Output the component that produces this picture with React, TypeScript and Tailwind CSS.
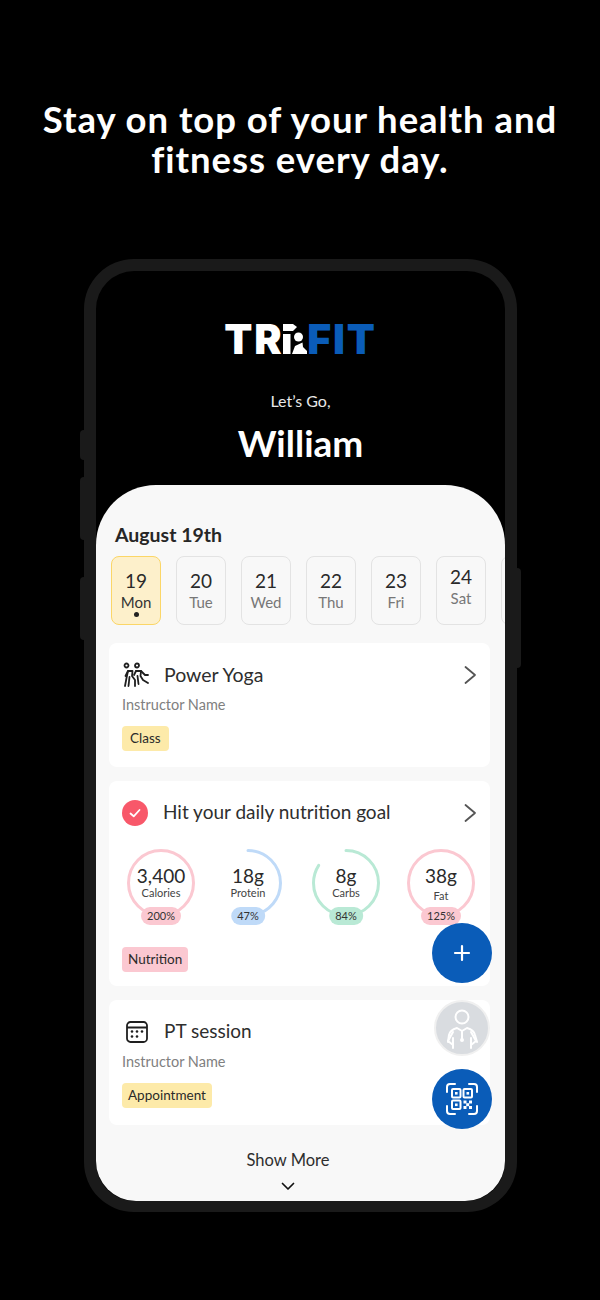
const sans = "font-['Lato','Noto_Sans',sans-serif]";

const days = [
  { n: "19", d: "Mon", active: true },
  { n: "20", d: "Tue" },
  { n: "21", d: "Wed" },
  { n: "22", d: "Thu" },
  { n: "23", d: "Fri" },
  { n: "24", d: "Sat", lifted: true },
];

const rings = [
  { value: "3,400", label: "Calories", pct: "200%", amount: 100, stroke: "#fbc8d1", pill: "bg-[#fbc8d1]", space: "ml-[18px]", low: false },
  { value: "18g", label: "Protein", pct: "47%", amount: 47, stroke: "#bfdaf8", pill: "bg-[#bfdaf8]", space: "ml-[19px]", low: false },
  { value: "8g", label: "Carbs", pct: "84%", amount: 84, stroke: "#b9e9d5", pill: "bg-[#b9e9d5]", space: "ml-[30px]", low: false },
  { value: "38g", label: "Fat", pct: "125%", amount: 100, stroke: "#fbc8d1", pill: "bg-[#fbc8d1]", space: "ml-[27px]", low: true },
];

function Chevron() {
  return (
    <svg width="14" height="20" viewBox="0 0 14 20" fill="none" stroke="#555" strokeWidth="1.8" strokeLinecap="round" strokeLinejoin="round">
      <path d="M2.5 2 L12 10 L2.5 18" />
    </svg>
  );
}

function LogoFigure() {
  return (
    <svg width="24" height="30" viewBox="0 0 24 30" fill="#fff">
      <path d="M0 0 H10 L14 3 L10 7 H0 Z" />
      <path d="M0 10 H7.5 V30 H0 Z" />
      <circle cx="15.5" cy="13" r="4.5" />
      <path d="M9 30 L12 22 L19.5 18.5 L20 23 L24 27 V30 Z" />
    </svg>
  );
}

function YogaIcon() {
  return (
    <svg width="27" height="27" viewBox="0 0 27 27" fill="none" stroke="#1f1f1f" strokeWidth="1.8" strokeLinecap="round" strokeLinejoin="round">
      <circle cx="4.5" cy="4.5" r="2" />
      <circle cx="15" cy="4.5" r="2" />
      <path d="M3 25 L4.5 17 L6 10 L10.5 10 L10 15 L13 19 L13 25" />
      <path d="M6 10 L3.5 15" />
      <path d="M7.5 16 L6.5 25" />
      <path d="M14 10 L19 10 L18.5 15 L21 19 L26 22" />
      <path d="M19 10 L23 14 L26 14" />
      <path d="M14 10 L12 14" />
      <path d="M15.5 15 L16.5 23" />
    </svg>
  );
}

function CalendarIcon() {
  return (
    <svg width="22" height="22" viewBox="0 0 22 22" fill="none" stroke="#1f1f1f" strokeWidth="1.8">
      <rect x="1" y="1" width="20" height="20" rx="3.5" />
      <path d="M1 6.5 H21" />
      <g fill="#1f1f1f" stroke="none">
        <circle cx="6" cy="10.5" r="1.3" />
        <circle cx="11" cy="10.5" r="1.3" />
        <circle cx="16" cy="10.5" r="1.3" />
        <circle cx="6" cy="15.5" r="1.3" />
        <circle cx="11" cy="15.5" r="1.3" />
      </g>
    </svg>
  );
}

function QrIcon() {
  return (
    <svg width="32" height="32" viewBox="0 0 32 32" fill="none" stroke="#fff" strokeWidth="2" strokeLinecap="round" strokeLinejoin="round">
      <path d="M1 9 V4 Q1 1 4 1 H9" />
      <path d="M23 1 H28 Q31 1 31 4 V9" />
      <path d="M1 23 V28 Q1 31 4 31 H9" />
      <path d="M31 23 V28 Q31 31 28 31 H23" />
      <rect x="6" y="6" width="8.5" height="8.5" rx="1" />
      <rect x="17.5" y="6" width="8.5" height="8.5" rx="1" />
      <rect x="6" y="17.5" width="8.5" height="8.5" rx="1" />
      <g fill="#fff" stroke="none">
        <rect x="9" y="9" width="2.6" height="2.6" />
        <rect x="20.5" y="9" width="2.6" height="2.6" />
        <rect x="9" y="20.5" width="2.6" height="2.6" />
        <rect x="17.5" y="17.5" width="3" height="3" />
        <rect x="23" y="17.5" width="3" height="3" />
        <rect x="20.2" y="20.2" width="3" height="3" />
        <rect x="17.5" y="23" width="3" height="3" />
        <rect x="23" y="23" width="3" height="3" />
      </g>
    </svg>
  );
}

function Avatar() {
  return (
    <svg width="52" height="52" viewBox="0 0 52 52" fill="none" stroke="#fff" strokeWidth="2" strokeLinecap="round" strokeLinejoin="round">
      <circle cx="26" cy="15" r="6.5" />
      <path d="M12 40 L13 33 Q14 28 21 26 L26 29 L31 26 Q38 28 39 33 L41 40" />
      <path d="M17 30 L12 39 L17 43" />
      <path d="M35 30 L40 39 L35 43" />
      <path d="M17 36 V46 M35 36 V46" />
      <path d="M26 29 V37" />
      <circle cx="26" cy="38" r="1" />
    </svg>
  );
}

function Ring({ amount, stroke }: { amount: number; stroke: string }) {
  const c = 2 * Math.PI * 32.5;
  return (
    <svg width="68" height="68" viewBox="0 0 68 68" fill="none" className="absolute inset-0 -rotate-90">
      <circle cx="34" cy="34" r="32.5" stroke={stroke} strokeWidth="3" strokeLinecap="round" strokeDasharray={`${(c * amount) / 100} ${c}`} />
    </svg>
  );
}

function Tag({ color, children }: { color: string; children: React.ReactNode }) {
  return <span className={`inline-flex h-[25px] items-center rounded-[4px] text-[13.5px] text-[#2a2a2a] ${color}`}>{children}</span>;
}

export default function App() {
  return (
    <div className={`relative flex h-[1300px] w-[600px] flex-col items-center overflow-hidden bg-black ${sans}`}>
      <h1 className="mt-[99px] h-[82px] w-full text-center text-[36.5px] font-bold leading-[40px] tracking-[0.95px] text-white">
        Stay on top of your health and
        <br />
        fitness every day.
      </h1>

      {/* phone */}
      <div className="relative mt-[78px] ml-[1px] h-[953px] w-[433px] rounded-[50px] border-[12px] border-b-[11px] border-[#1a1a1a] bg-black">
        <span className="absolute -left-[16px] top-[159px] h-[30px] w-[4px] rounded-l-sm bg-[#1a1a1a]" />
        <span className="absolute -left-[16px] top-[206px] h-[63px] w-[4px] rounded-l-sm bg-[#1a1a1a]" />
        <span className="absolute -left-[16px] top-[306px] h-[63px] w-[4px] rounded-l-sm bg-[#1a1a1a]" />
        <span className="absolute -right-[16px] top-[297px] h-[100px] w-[4px] rounded-r-sm bg-[#1a1a1a]" />

        <div className="flex h-full flex-col">
          <div className="flex h-[214px] flex-col items-center">
            <div className="mt-[52px] flex h-[32px] items-center text-[41px] font-black leading-none tracking-[1.8px] font-['Inter',sans-serif]">
              <span className="text-white">TR</span>
              <LogoFigure />
              <span className="text-[#0a5cb8]">FIT</span>
            </div>
            <p className="mt-[36px] text-[16px] leading-5 text-[#e8e8e8]">Let’s Go,</p>
            <p className="mt-[10px] text-[37px] font-bold leading-[44px] text-white">William</p>
          </div>

          {/* sheet */}
          <div className="relative flex-1 overflow-hidden rounded-t-[60px] rounded-b-[40px] bg-[#f8f8f8]">
            <h2 className="ml-[19px] mt-[37px] text-[19.5px] font-bold leading-[26px] text-[#262626]">August 19th</h2>

            <div className="ml-[15px] mt-[8px] flex w-[500px] gap-[15px]">
              {days.map((day) => (
                <div
                  key={day.n}
                  className={`relative flex h-[69px] w-[50px] shrink-0 flex-col items-center rounded-[8px] border ${
                    day.active ? "border-[#fbd667] bg-[#fdf0cb]" : "border-[#e3e3e3]"
                  } ${day.lifted ? "pt-[9px]" : "pt-[13px]"}`}
                >
                  <span className="text-[19px] leading-[22px] text-[#2a2a2a]">{day.n}</span>
                  <span className={`text-[15px] leading-[20px] ${day.active ? "text-[#333]" : "text-[#777]"}`}>{day.d}</span>
                  {day.active && <span className="h-[5px] w-[5px] rounded-full bg-[#222]" />}
                </div>
              ))}
              <div className="h-[69px] w-[50px] shrink-0 rounded-[8px] border border-[#e3e3e3]" />
            </div>

            <div className="ml-[13px] mt-[18px] flex w-[381px] flex-col gap-[14px]">
              <div className="h-[124px] rounded-[8px] bg-white px-[13px] pt-[18px]">
                <div className="flex h-[27px] items-center">
                  <YogaIcon />
                  <span className="ml-[15px] flex-1 text-[19.5px] text-[#2e2e2e]">Power Yoga</span>
                  <Chevron />
                </div>
                <p className="mt-[7px] text-[14.5px] leading-5 text-[#808080]">Instructor Name</p>
                <div className="mt-[10px]"><Tag color="bg-[#fdeaa9] px-[8px]">Class</Tag></div>
              </div>

              <div className="h-[205px] rounded-[8px] bg-white pt-[18px]">
                <div className="flex h-[27px] items-center px-[13px]">
                  <span className="flex h-[26px] w-[26px] items-center justify-center rounded-full bg-[#f8586a]">
                    <svg width="14" height="14" viewBox="0 0 14 14" fill="none" stroke="#fff" strokeWidth="1.8" strokeLinecap="round" strokeLinejoin="round">
                      <path d="M2.5 7.5 L5.7 10.3 L11.5 4" />
                    </svg>
                  </span>
                  <span className="ml-[15px] flex-1 text-[19px] text-[#2e2e2e]">Hit your daily nutrition goal</span>
                  <Chevron />
                </div>
                <div className="mt-[23px] flex">
                  {rings.map((r) => (
                    <div key={r.label} className={`relative h-[68px] w-[68px] shrink-0 ${r.space}`}>
                      <Ring amount={r.amount} stroke={r.stroke} />
                      <div className="relative flex flex-col items-center pt-[17px]">
                        <span className="text-[19px] leading-[20px] text-[#2a2a2a]">{r.value}</span>
                        <span className={`text-[11px] leading-[13px] text-[#444] ${r.low ? "mt-[3px]" : ""}`}>{r.label}</span>
                      </div>
                      <span className={`absolute left-1/2 top-[58px] flex h-[18px] -translate-x-1/2 items-center rounded-[9px] px-[6px] text-[11px] text-[#333] ${r.pill}`}>{r.pct}</span>
                    </div>
                  ))}
                </div>
                <div className="ml-[13px] mt-[29px]"><Tag color="bg-[#fbc8d1] px-[6px]">Nutrition</Tag></div>
              </div>

              <div className="h-[125px] rounded-[8px] bg-white px-[13px] pt-[18px]">
                <div className="flex h-[27px] items-center">
                  <span className="ml-[4px]"><CalendarIcon /></span>
                  <span className="ml-[16px] text-[19px] text-[#2e2e2e]">PT session</span>
                </div>
                <p className="mt-[7px] text-[14.5px] leading-5 text-[#808080]">Instructor Name</p>
                <div className="mt-[10px]"><Tag color="bg-[#fdeaa9] px-[6px]">Appointment</Tag></div>
              </div>
            </div>

            <div className="mt-[25px] ml-[13px] flex w-[358px] flex-col items-center">
              <span className="text-[16.5px] leading-5 text-[#2e2e2e]">Show More</span>
              <svg className="mt-[12px]" width="14" height="9" viewBox="0 0 14 9" fill="none" stroke="#111" strokeWidth="1.7" strokeLinecap="round" strokeLinejoin="round">
                <path d="M1.5 1.5 L7 7 L12.5 1.5" />
              </svg>
            </div>
          </div>
        </div>

        {/* floating buttons */}
        <div className="absolute left-[336px] top-[652px] flex flex-col items-center">
          <button className="flex h-[60px] w-[60px] items-center justify-center rounded-full bg-[#0a5cb8]">
            <svg width="18" height="18" viewBox="0 0 18 18" stroke="#fff" strokeWidth="2.2" strokeLinecap="round">
              <path d="M9 2 V16 M2 9 H16" />
            </svg>
          </button>
          <div className="mt-[17px] flex h-[56px] w-[56px] items-center justify-center overflow-hidden rounded-full border-2 border-[#f0f0f0] bg-[#d9dce0]">
            <Avatar />
          </div>
          <button className="mt-[13px] flex h-[60px] w-[60px] items-center justify-center rounded-full bg-[#0a5cb8]">
            <QrIcon />
          </button>
        </div>
      </div>
    </div>
  );
}
